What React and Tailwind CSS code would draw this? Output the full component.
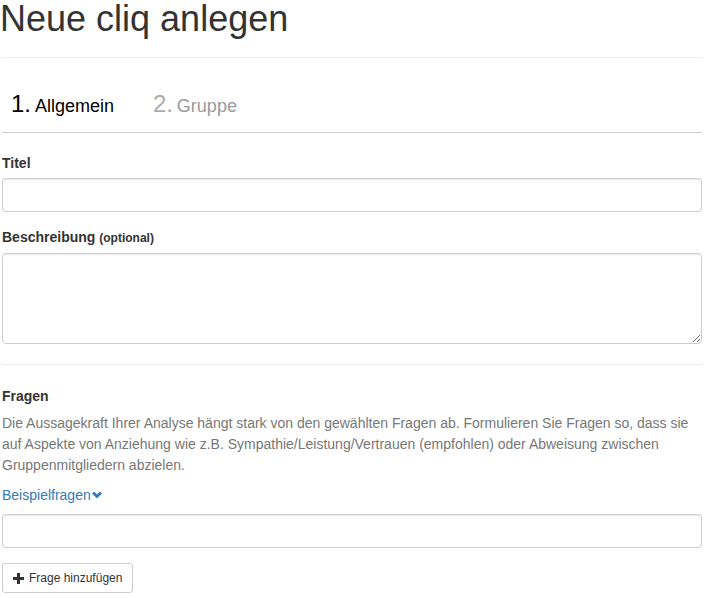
import React, { useState } from 'react';

const inputClass =
  'block w-full h-[34px] rounded-[4px] border border-[#ccc] bg-white px-3 text-[14px] text-[#555] shadow-[inset_0_1px_1px_rgba(0,0,0,0.075)] outline-none';

const PlusIcon = () => (
  <svg width="11" height="11" viewBox="0 0 11 11" className="shrink-0">
    <path d="M4 0h3v4h4v3H7v4H4V7H0V4h4z" fill="#333" />
  </svg>
);

const ChevronDown = () => (
  <svg width="10" height="8" viewBox="0 0 10 8" className="inline-block ml-[1px] align-[1px]">
    <path d="M1 1.5 5 5.5 9 1.5" fill="none" stroke="#337ab7" strokeWidth="3" strokeLinejoin="miter" />
  </svg>
);

export default function App() {
  const [activeTab] = useState(1);
  const [questions, setQuestions] = useState(['']);

  return (
    <div className="w-[714px] bg-white px-[2px] font-['Liberation_Sans',Arial,sans-serif] text-[14px] text-[#333]">
      <h1 className="-ml-[2px] text-[36px] leading-[38px] font-normal text-[#333]">Neue cliq anlegen</h1>
      <div className="mt-[19px] w-[700px] border-t border-[#eee]"></div>

      {/* Steps */}
      <div className="mt-[34px] flex items-baseline gap-[21px] border-b border-[#ccc] pb-[13px] w-[700px]">
        <div className={`px-[9px] leading-[24px] ${activeTab === 1 ? 'text-black' : 'text-[#999]'}`}>
          <span className="text-[24px]">1.</span> <span className="text-[18px]">Allgemein</span>
        </div>
        <div className="px-[9px] leading-[24px] text-[#999]">
          <span className="text-[24px] text-[#aaa]">2.</span> <span className="text-[18px]">Gruppe</span>
        </div>
      </div>

      {/* Titel */}
      <div className="mt-[20px] w-[700px]">
        <label className="block font-bold leading-[20px] mb-[5px]">Titel</label>
        <input type="text" className={inputClass} />
      </div>

      {/* Beschreibung */}
      <div className="mt-[15px] w-[700px]">
        <label className="block font-bold leading-[20px] mb-[5px]">
          Beschreibung <span className="text-[12px]">(optional)</span>
        </label>
        <textarea className="block w-full h-[91px] rounded-[4px] border border-[#ccc] bg-white px-3 py-[6px] text-[14px] text-[#555] shadow-[inset_0_1px_1px_rgba(0,0,0,0.075)] outline-none"></textarea>
      </div>

      <div className="mt-[20px] w-[700px] border-t border-[#eee]"></div>

      {/* Fragen */}
      <div className="mt-[21px] w-[700px]">
        <div className="font-bold leading-[20px]">Fragen</div>
        <p className="mt-[7px] leading-[21px] text-[#777]">
          Die Aussagekraft Ihrer Analyse hängt stark von den gewählten Fragen ab. Formulieren Sie Fragen so, dass sie auf Aspekte von Anziehung wie z.B. Sympathie/Leistung/Vertrauen (empfohlen) oder Abweisung zwischen Gruppenmitgliedern abzielen.
        </p>
        <a href="#" className="mt-[9px] block leading-[20px] text-[#337ab7]">
          Beispielfragen<ChevronDown />
        </a>

        {questions.map((q, i) => (
          <input
            key={i}
            type="text"
            value={q}
            onChange={e => setQuestions(questions.map((v, j) => (j === i ? e.target.value : v)))}
            className={`${inputClass} mt-[9px]`}
          />
        ))}

        <button
          type="button"
          onClick={() => setQuestions([...questions, ''])}
          className="mt-[15px] flex h-[30px] items-center gap-[5px] rounded-[3px] border border-[#ccc] bg-white px-[10px] text-[12px] text-[#333]"
        >
          <PlusIcon />
          Frage hinzufügen
        </button>
      </div>
    </div>
  );
}
